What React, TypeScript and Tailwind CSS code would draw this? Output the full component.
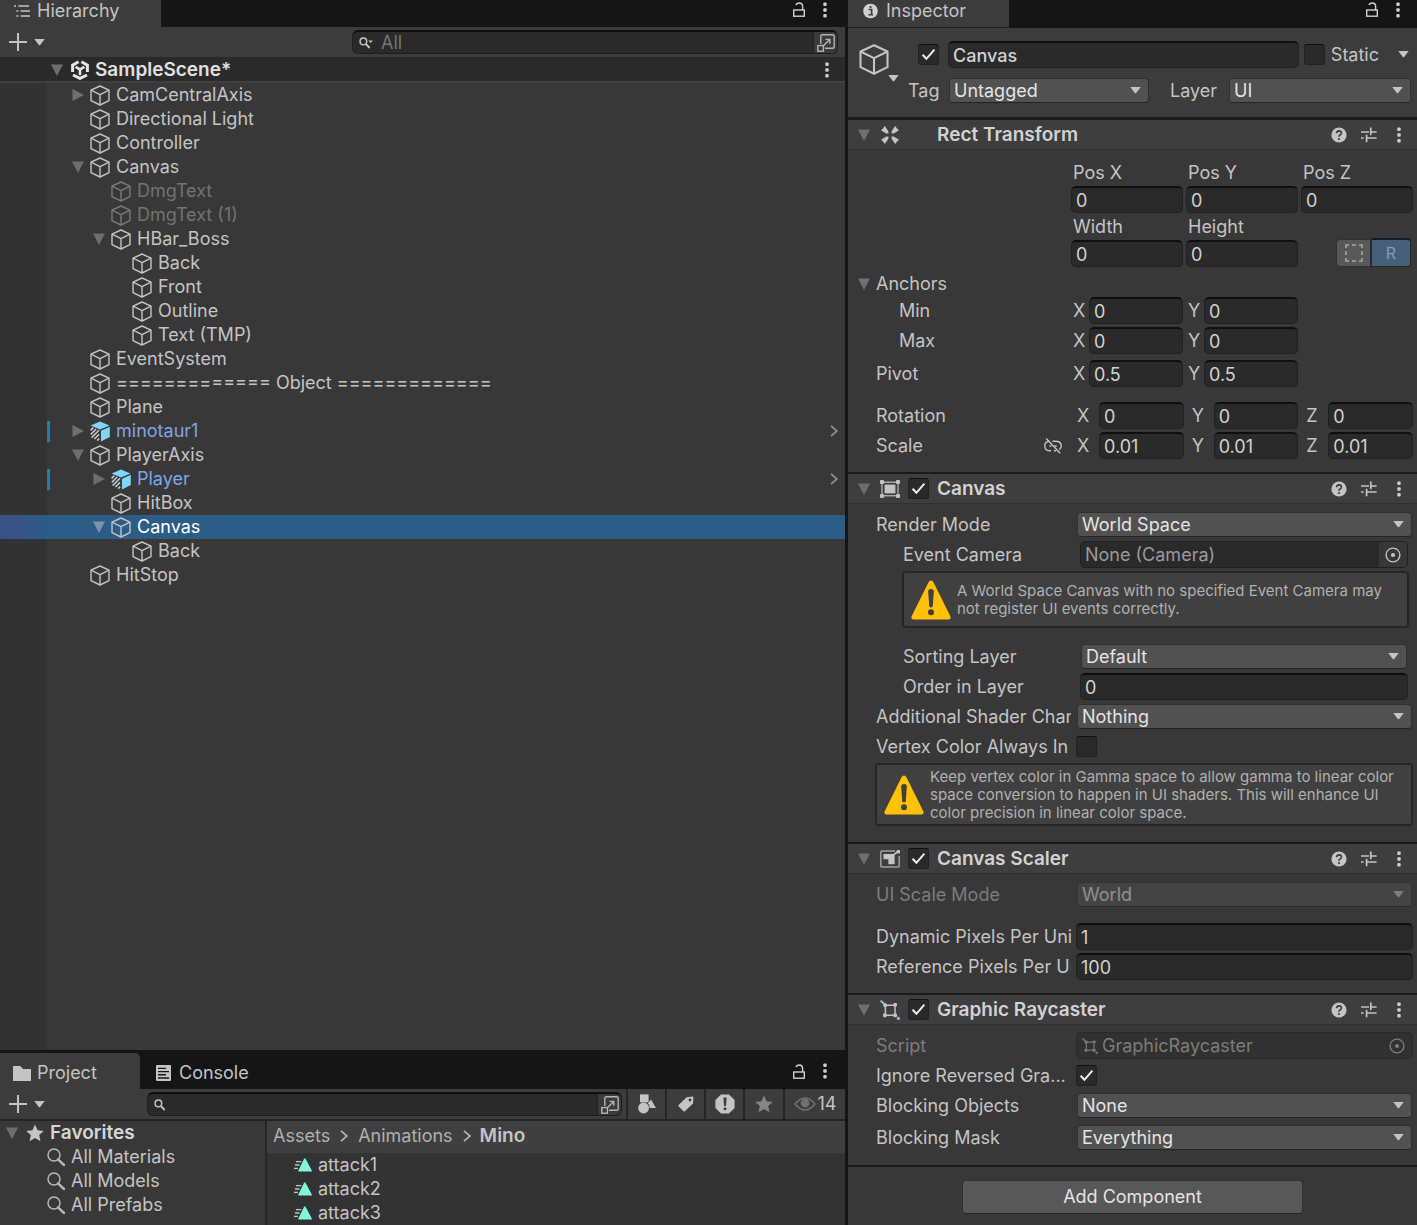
import { useState, type ReactNode } from 'react';

type IconProps = { className?: string };

function Triangle({ open = true, className = '' }: { open?: boolean; className?: string }) {
  return (
    <svg viewBox="0 0 12 12" className={`w-3 h-3 shrink-0 ${className}`} fill="currentColor">
      {open ? <path d="M0 0.5h12L6 12z" /> : <path d="M0.5 0L12 6 0.5 12z" />}
    </svg>
  );
}

function Caret({ className = '' }: IconProps) {
  return (
    <svg viewBox="0 0 11 7" className={`w-[11px] h-[7px] shrink-0 text-[#c4c4c4] ${className}`} fill="currentColor">
      <path d="M0.3 0h10.4L6.4 5.8Q5.5 6.9 4.6 5.8z" />
    </svg>
  );
}

function Cube({ className = 'w-5 h-[21px]' }: IconProps) {
  return (
    <svg viewBox="0 0 20 21" className={`shrink-0 ${className}`} fill="none" stroke="currentColor" strokeWidth="1.4" strokeLinejoin="round">
      <path d="M10 1L19 5.2V15.6L10 20L1 15.6V5.2z" />
      <path d="M1 5.2L10 9.6L19 5.2M10 9.6V20" />
    </svg>
  );
}

function PrefabCube() {
  return (
    <svg viewBox="0 0 20 21" className="w-5 h-[21px] shrink-0">
      <path d="M10 0.4L19.4 4.4L10 8.6L0.6 4.4z" fill="#7fd6fd" />
      <path d="M11 9.8L19.8 5.8V16L11 20.6z" fill="#7fd6fd" />
      <path d="M0.6 9.4L3.4 6.6M0.8 13.4L6.2 8M1.6 16.6L9 9.2M4.4 18L9 13.4M7.2 19.6L9.2 17.6" stroke="#c9c9c9" strokeWidth="1.5" />
    </svg>
  );
}

function UnityLogo() {
  return (
    <svg viewBox="0 0 18 20" className="w-[18px] h-5 shrink-0" fill="none" stroke="#e6e6e6" strokeWidth="3">
      <path d="M7.6 1.8L1.6 5.2V12M10.4 1.8L16.4 5.2V12M2 15L9 18.4L16 15" />
      <path d="M4.6 6.8L9 9.4L13.4 6.8M9 9.4V15" strokeWidth="2.6" />
    </svg>
  );
}

function Kebab({ className = '' }: IconProps) {
  return (
    <svg viewBox="0 0 4 16" className={`w-1 h-4 shrink-0 text-[#d0d0d0] ${className}`} fill="currentColor">
      <rect x="0.3" y="0.5" width="3.4" height="3.4" rx="1" />
      <rect x="0.3" y="6.3" width="3.4" height="3.4" rx="1" />
      <rect x="0.3" y="12.1" width="3.4" height="3.4" rx="1" />
    </svg>
  );
}

function Lock() {
  return (
    <svg viewBox="0 0 12 15" className="w-3 h-[15px] shrink-0" fill="none" stroke="#d0d0d0" strokeWidth="1.4">
      <rect x="0.7" y="8" width="10.6" height="6.2" />
      <path d="M9.6 8V4.2Q9.6 1 6.4 1Q3.6 1 3 3" />
    </svg>
  );
}

function Plus() {
  return (
    <svg viewBox="0 0 18 18" className="w-[18px] h-[18px]" stroke="#c4c4c4" strokeWidth="2">
      <path d="M9 0v18M0 9h18" />
    </svg>
  );
}

function SearchSmall({ menu = false }: { menu?: boolean }) {
  return (
    <svg viewBox="0 0 14 12" className="w-[14px] h-3 shrink-0" fill="none" stroke="#c4c4c4">
      <circle cx="4.4" cy="4.4" r="3.3" strokeWidth="1.5" />
      <path d="M6.8 6.8L10.6 11" strokeWidth="1.9" />
      {menu && <path d="M9.4 3.4h4.4L11.6 6z" fill="#c4c4c4" stroke="none" />}
    </svg>
  );
}

function SearchLarge() {
  return (
    <svg viewBox="0 0 18 18" className="w-[18px] h-[18px] shrink-0" fill="none" stroke="#b9b9b9">
      <circle cx="7" cy="7" r="6" strokeWidth="1.4" />
      <path d="M11 11.4L17 17" strokeWidth="2.4" strokeLinecap="round" />
    </svg>
  );
}

function OpenWindow() {
  return (
    <svg viewBox="0 0 18 18" className="w-[18px] h-[18px]" fill="none" stroke="#b4b4b4" strokeWidth="1.4">
      <path d="M3.8 10V2.6Q3.8 0.8 5.6 0.8H15.4Q17.2 0.8 17.2 2.6V12.4Q17.2 14.2 15.4 14.2H8" />
      <rect x="0.8" y="11.6" width="5.6" height="5.6" />
      <path d="M6.6 11.4L12.6 5.4M8.4 5.4H12.8V9.8" />
    </svg>
  );
}

function Warning() {
  return (
    <svg viewBox="0 0 40 40" className="w-10 h-10 shrink-0">
      <path d="M20 0.5Q21.6 0.5 22.6 2.6L39.2 36Q40.6 39.5 37.4 39.5H2.6Q-0.6 39.5 0.8 36L17.4 2.6Q18.4 0.5 20 0.5z" fill="#ffc107" />
      <path d="M17.2 11.6Q17.2 9 20 9T22.8 11.6L21.8 26Q21.6 27.4 20 27.4T18.2 26z" fill="#3f3f3f" />
      <circle cx="20" cy="32.2" r="3" fill="#3f3f3f" />
    </svg>
  );
}

function HelpIcon() {
  return (
    <svg viewBox="0 0 16 16" className="w-4 h-4">
      <circle cx="8" cy="8" r="7.6" fill="#c4c4c4" />
      <path d="M5.6 6.2Q5.8 3.9 8.1 3.9Q10.5 4 10.4 6Q10.3 7.2 9 8Q8 8.6 8 9.8" fill="none" stroke="#3e3e3e" strokeWidth="1.7" />
      <circle cx="8" cy="12" r="1.1" fill="#3e3e3e" />
    </svg>
  );
}

function Presets() {
  return (
    <svg viewBox="0 0 16 16" className="w-4 h-4" fill="none" stroke="#c4c4c4" strokeWidth="1.7">
      <path d="M0 5h8M10 5h5.6M9.8 0.6v7.6M0 11h2.6M5 11h10.6M5.6 7.8v7.4" />
    </svg>
  );
}

function Target({ className = '' }: IconProps) {
  return (
    <svg viewBox="0 0 16 16" className={`w-4 h-4 ${className}`} fill="none" stroke="currentColor">
      <circle cx="8" cy="8" r="6.9" strokeWidth="1.4" />
      <circle cx="8" cy="8" r="2.1" fill="currentColor" stroke="none" />
    </svg>
  );
}

function RectTransformIcon() {
  return (
    <svg viewBox="0 0 20 20" className="w-5 h-5" fill="#c4c4c4">
      <path d="M4.8 1L8.4 6.2V8.4H6.2L1 5.2L3 3.4z" />
      <path d="M15.2 1L11.6 6.2V8.4H13.8L19 5.2L17 3.4z" />
      <path d="M4.8 19L8.4 13.8V11.6H6.2L1 14.8L3 16.6z" />
      <path d="M15.2 19L11.6 13.8V11.6H13.8L19 14.8L17 16.6z" />
    </svg>
  );
}

function CanvasIcon() {
  return (
    <svg viewBox="0 0 20 18" className="w-5 h-[18px]" fill="#c4c4c4">
      <path d="M2 2.2h16v13.6H2z" fill="none" stroke="#a8a8a8" strokeWidth="1.4" />
      <rect x="4.6" y="4.6" width="10.8" height="8.8" />
      <rect width="4" height="4" rx="1" />
      <rect x="16" width="4" height="4" rx="1" />
      <rect y="14" width="4" height="4" rx="1" />
      <rect x="16" y="14" width="4" height="4" rx="1" />
    </svg>
  );
}

function ScalerIcon() {
  return (
    <svg viewBox="0 0 20 18" className="w-5 h-[18px]" fill="#c4c4c4">
      <path d="M15 1H2Q0.8 1 0.8 2.2V15.8Q0.8 17 2 17H18Q19.2 17 19.2 15.8V6" fill="none" stroke="#a0a0a0" strokeWidth="1.5" />
      <path d="M3.4 4H14.6V14.2H8.4V9.2H3.4z" />
      <path d="M14 4.6L17.6 1.6" stroke="#c4c4c4" strokeWidth="1.6" />
      <rect x="16.6" width="3.4" height="3.4" rx="1" />
    </svg>
  );
}

function RaycasterIcon({ className = 'w-5 h-5' }: IconProps) {
  return (
    <svg viewBox="0 0 20 20" className={`shrink-0 ${className}`} fill="#c4c4c4">
      <path d="M0.6 0.6L5 4.6" stroke="#7cc4e8" strokeWidth="2" />
      <path d="M5.4 5.2h9.6v10H5.4z" fill="none" stroke="#c4c4c4" strokeWidth="1.5" />
      <rect x="3.4" y="3.4" width="3.6" height="3.6" rx="1" />
      <rect x="13.4" y="3" width="3.6" height="3.6" rx="1" />
      <rect x="3" y="13.6" width="3.6" height="3.6" rx="1" />
      <rect x="13.4" y="13.6" width="3.6" height="3.6" rx="1" />
      <circle cx="18.4" cy="18.4" r="1.6" fill="#7cc4e8" />
    </svg>
  );
}

function LinkOff() {
  return (
    <svg viewBox="0 0 18 16" className="w-[18px] h-4" fill="none" stroke="#c4c4c4" strokeWidth="1.4">
      <path d="M5.4 3.2Q0.8 3.4 0.8 8Q0.8 12.6 5.4 12.8H7M8.4 3.2H12.4Q17.2 3.6 17.2 8Q17.2 10.2 15.4 11.6M5.4 8h2M10.4 8h2.4M9.8 12.8h2.4" />
      <path d="M2.2 0.6L16.2 15.2" />
    </svg>
  );
}

function Chevron({ className = '' }: IconProps) {
  return (
    <svg viewBox="0 0 8 12" className={`w-2 h-3 shrink-0 ${className}`} fill="none" stroke="currentColor" strokeWidth="1.8">
      <path d="M1 0.8L6.8 6L1 11.2" />
    </svg>
  );
}

function ClipIcon() {
  return (
    <svg viewBox="0 0 18 14" className="w-[18px] h-[14px] shrink-0">
      <path d="M11.4 0.4L17.8 12.4Q18 13.6 17 13.6H5Q4 13.6 4.4 12.4L10.2 0.4z" fill="#80f7dc" />
      <path d="M2 3.6H7.4M1 7H5.6M0 10.4H4" stroke="#b9c9c5" strokeWidth="1.3" />
    </svg>
  );
}

function Star({ className = '' }: IconProps) {
  return (
    <svg viewBox="0 0 18 18" className={`w-[18px] h-[18px] shrink-0 ${className}`} fill="currentColor">
      <path d="M9 0.5L11.6 6.2L17.8 6.9L13.2 11L14.5 17.2L9 14.1L3.5 17.2L4.8 11L0.2 6.9L6.4 6.2z" />
    </svg>
  );
}

/* ---------- controls ---------- */

function Checkbox({ label, checked = false }: { label: string; checked?: boolean }) {
  return (
    <span className="relative w-[21px] h-[21px] shrink-0">
      <input
        type="checkbox"
        aria-label={label}
        defaultChecked={checked}
        className="peer block w-full h-full appearance-none rounded-[3px] bg-[#2a2a2a] border border-[#212121] border-t-[#101010]"
      />
      <svg viewBox="0 0 21 21" className="absolute inset-0 hidden pointer-events-none peer-checked:block" fill="none" stroke="#eeeeee" strokeWidth="2">
        <path d="M4.6 10.8L8.4 14.8L16.4 5.6" />
      </svg>
    </span>
  );
}

function TextField({ label, value, className = '' }: { label: string; value: string; className?: string }) {
  return (
    <input
      type="text"
      aria-label={label}
      defaultValue={value}
      className={`w-full min-w-0 h-[27px] px-1 rounded-[5px] bg-[#2a2a2a] border border-[#212121] border-t-2 border-t-[#0f0f0f] text-[#d2d2d2] outline-none ${className}`}
    />
  );
}

function Dropdown({ label, value, disabled = false }: { label: string; value: string; disabled?: boolean }) {
  return (
    <span className={`relative flex-1 min-w-0 mx-px ${disabled ? 'opacity-50' : ''}`}>
      <select
        aria-label={label}
        disabled={disabled}
        className="block w-full h-[25px] pl-1 pr-6 appearance-none rounded-[4px] bg-[#515151] border border-[#303030] border-b-[#242424] text-[#e4e4e4] leading-5 outline-none"
      >
        <option>{value}</option>
      </select>
      <Caret className="absolute right-2 top-[9px] pointer-events-none" />
    </span>
  );
}

function Row({ label, children, indent = false, dim = false, className = 'h-[27px]' }: {
  label: string;
  children: ReactNode;
  indent?: boolean;
  dim?: boolean;
  className?: string;
}) {
  return (
    <div className={`flex items-center ${className}`}>
      <span className={`w-[195px] mr-[5px] shrink-0 overflow-hidden whitespace-nowrap ${indent ? 'pl-[27px]' : ''} ${dim ? 'text-[#7c7c7c]' : ''}`}>
        {label}
      </span>
      <div className={`flex items-center flex-1 min-w-0 ${indent ? 'pl-1 pr-[5px]' : ''}`}>{children}</div>
    </div>
  );
}

function AxisRow({ label, values, wide = false, child = false, className = '', extra }: {
  label: string;
  values: string[];
  wide?: boolean;
  child?: boolean;
  className?: string;
  extra?: ReactNode;
}) {
  return (
    <div className={`flex items-center h-[27px] ${className}`}>
      <div className={`flex items-center justify-between shrink-0 ${wide ? 'w-[201px] pr-[15px]' : 'w-[195px]'} ${child ? 'pl-[23px]' : ''}`}>
        <span>{label}</span>
        {extra}
      </div>
      <div className={`grid grid-cols-3 flex-1 ${wide ? 'gap-2' : 'gap-[3px]'}`}>
        {values.map((value, i) => {
          const axis = 'XYZ'[i];
          return (
            <label key={axis} className="flex items-center">
              <span className={`shrink-0 ${wide ? 'w-[22px]' : 'w-[18px] pl-[2px]'}`}>{axis}</span>
              <TextField label={`${label} ${axis}`} value={value} />
            </label>
          );
        })}
      </div>
    </div>
  );
}

function HelpBox({ children, className = '' }: { children: ReactNode; className?: string }) {
  return (
    <div className={`flex items-center gap-[6px] pl-[7px] pr-4 rounded-[4px] bg-[#404040] border-2 border-[#262626] text-[15px] leading-[18px] text-[#b0b0b0] ${className}`}>
      <Warning />
      <p>{children}</p>
    </div>
  );
}

function Section({ title, icon, toggle = true, children, className = '' }: {
  title: string;
  icon: ReactNode;
  toggle?: boolean;
  children: ReactNode;
  className?: string;
}) {
  const [open, setOpen] = useState(true);

  return (
    <section className="border-b-2 border-[#1a1a1a]">
      <header className="flex items-center h-[30px] pl-[10px] pr-4 bg-[#3e3e3e] border-b border-[#303030]">
        <button aria-label={`Toggle ${title}`} onClick={() => setOpen(!open)} className="mr-[10px] text-[#6e6e6e]">
          <Triangle open={open} />
        </button>
        <span className="flex items-center justify-center w-5 mr-2">{icon}</span>
        {toggle ? <Checkbox label={`${title} enabled`} checked /> : <span className="w-[21px]" />}
        <h2 className="ml-2 pt-px text-[19px] font-semibold text-[#d2d2d2]">{title}</h2>
        <div className="flex items-center ml-auto">
          <button aria-label="Help" className="mr-[14px]"><HelpIcon /></button>
          <button aria-label="Presets" className="mr-5"><Presets /></button>
          <button aria-label="More"><Kebab /></button>
        </div>
      </header>
      {open && <div className={`flex flex-col pl-7 pr-1 ${className}`}>{children}</div>}
    </section>
  );
}

/* ---------- hierarchy ---------- */

interface Item {
  name: string;
  depth: number;
  open?: boolean;
  prefab?: boolean;
  disabled?: boolean;
  selected?: boolean;
}

const items: Item[] = [
  { name: 'CamCentralAxis', depth: 0, open: false },
  { name: 'Directional Light', depth: 0 },
  { name: 'Controller', depth: 0 },
  { name: 'Canvas', depth: 0, open: true },
  { name: 'DmgText', depth: 1, disabled: true },
  { name: 'DmgText (1)', depth: 1, disabled: true },
  { name: 'HBar_Boss', depth: 1, open: true },
  { name: 'Back', depth: 2 },
  { name: 'Front', depth: 2 },
  { name: 'Outline', depth: 2 },
  { name: 'Text (TMP)', depth: 2 },
  { name: 'EventSystem', depth: 0 },
  { name: '============= Object =============', depth: 0 },
  { name: 'Plane', depth: 0 },
  { name: 'minotaur1', depth: 0, open: false, prefab: true },
  { name: 'PlayerAxis', depth: 0, open: true },
  { name: 'Player', depth: 1, open: false, prefab: true },
  { name: 'HitBox', depth: 1 },
  { name: 'Canvas', depth: 1, open: true, selected: true },
  { name: 'Back', depth: 2 },
  { name: 'HitStop', depth: 0 },
];

const indents = ['pl-[22px]', 'pl-[43px]', 'pl-[64px]'];

function TreeRow({ item }: { item: Item }) {
  let color = 'text-[#c4c4c4]';
  if (item.prefab) color = 'text-[#7fa5e6]';
  if (item.disabled) color = 'text-[#727272]';
  if (item.selected) color = 'text-white';

  return (
    <li className={`flex h-6 ${item.selected ? 'bg-[#2c5d87]' : ''}`}>
      <span className={`w-[47px] shrink-0 ${item.selected ? 'bg-linear-to-r from-[#3a5185] to-[#2c5b87]' : 'bg-[#323232]'}`} />
      <div className="flex items-center flex-1 pr-[7px]">
        <span className={`w-[3px] h-[21px] -mr-[3px] ${item.prefab ? 'bg-[#1b7fb4]' : ''}`} />
        <span className={`flex items-center ${indents[item.depth]} ${color}`}>
          <span className={`w-6 pl-[3px] ${item.selected ? 'text-[#7b93a8]' : 'text-[#6e6e6e]'}`}>
            {item.open !== undefined && <Triangle open={item.open} />}
          </span>
          <span className={`ml-[-3px] mr-[6px] ${item.disabled ? 'text-[#7a7a7a]' : 'text-[#c4c4c4]'}`}>
            {item.prefab ? <PrefabCube /> : <Cube />}
          </span>
          {item.name}
        </span>
        {item.prefab && <Chevron className="ml-auto text-[#8f8f8f]" />}
      </div>
    </li>
  );
}

function AddMenu() {
  return (
    <button aria-label="Add" className="flex items-center gap-[7px] pl-[9px]">
      <Plus />
      <Caret />
    </button>
  );
}

function SearchBox({ placeholder, menu = false, className = '' }: { placeholder?: string; menu?: boolean; className?: string }) {
  return (
    <div className={`flex items-center h-6 pl-[6px] rounded-[6px] bg-[#2a2a2a] border border-[#1e1e1e] border-t-2 border-t-[#0f0f0f] ${className}`}>
      <SearchSmall menu={menu} />
      <input
        type="text"
        aria-label="Search"
        placeholder={placeholder}
        className="flex-1 min-w-0 pl-2 h-5 bg-transparent outline-none placeholder:text-[#757575]"
      />
      <button aria-label="Open in search window" className="flex items-center justify-center w-6 h-full rounded-r-[5px] bg-[#3a3a3a] border-l border-[#222222]">
        <OpenWindow />
      </button>
    </div>
  );
}

function Hierarchy() {
  return (
    <section className="flex flex-col flex-1 min-h-0 bg-[#383838]">
      <div className="flex items-center justify-between h-[27px] pr-[18px] bg-[#151515]">
        <h1 className="flex items-center gap-[7px] w-[161px] h-full pl-[14px] pb-[5px] bg-[#3c3c3c]">
          <svg viewBox="0 0 16 12" className="w-4 h-3" stroke="#c4c4c4" strokeWidth="1.4">
            <path d="M0 1h2M4.4 1H15M2.4 6h2M6.6 6H16M2.4 11h2M6.6 11H16" />
          </svg>
          Hierarchy
        </h1>
        <div className="flex items-center gap-[18px] pb-2">
          <button aria-label="Lock"><Lock /></button>
          <button aria-label="More"><Kebab /></button>
        </div>
      </div>
      <div className="flex items-center justify-between h-[30px] pr-[7px] bg-[#3c3c3c]">
        <AddMenu />
        <SearchBox placeholder="All" menu className="w-[58%]" />
      </div>
      <div className="flex items-center h-[26px] pt-[2px] pl-[51px] pr-4 bg-[#2a2a2a] border-b-2 border-[#404040]">
        <Triangle className="text-[#6e6e6e]" />
        <span className="ml-2 mr-[6px]"><UnityLogo /></span>
        <span className="text-[19px] font-semibold text-[#e0e0e0]">SampleScene*</span>
        <button aria-label="Scene menu" className="ml-auto"><Kebab /></button>
      </div>
      <ul>
        {items.map((item, i) => (
          <TreeRow key={i} item={item} />
        ))}
      </ul>
      <div className="w-[47px] flex-1 bg-[#323232]" />
    </section>
  );
}

/* ---------- project ---------- */

const toolButton = 'flex items-center justify-center h-full border-l-2 border-[#262626]';

function Project() {
  return (
    <section className="flex flex-col h-[175px] shrink-0 bg-[#383838]">
      <div className="flex items-end h-[39px] pr-[18px] bg-[#151515]">
        <button className="flex items-center gap-[6px] w-[140px] h-9 pl-[13px] pt-1 rounded-tr-[5px] bg-[#3c3c3c]">
          <svg viewBox="0 0 18 15" className="w-[18px] h-[15px]" fill="#c4c4c4">
            <path d="M0 0h7.4L10 3h8v12H0z" />
          </svg>
          Project
        </button>
        <button className="flex items-center gap-2 h-9 pl-4 pt-1">
          <svg viewBox="0 0 15 16" className="w-[15px] h-4">
            <rect width="15" height="16" rx="1" fill="#c4c4c4" />
            <path d="M2 3.4h8M2 6.6h11M2 9.8h8M2 13h11" stroke="#151515" strokeWidth="1.4" />
          </svg>
          Console
        </button>
        <div className="flex items-center gap-[18px] h-9 ml-auto">
          <button aria-label="Lock"><Lock /></button>
          <button aria-label="More"><Kebab /></button>
        </div>
      </div>
      <div className="flex items-center h-8 bg-[#3c3c3c] border-b-2 border-[#242424]">
        <AddMenu />
        <SearchBox className="flex-1 ml-[102px] mr-1" />
        <button aria-label="Search by type" className={`${toolButton} w-[39px]`}>
          <svg viewBox="0 0 18 20" className="w-[18px] h-5" fill="#c4c4c4">
            <rect x="2" y="0.4" width="8.6" height="8" />
            <circle cx="5.6" cy="14" r="5.4" />
            <path d="M13 5.4L18 14H11.6Q11.6 10.6 9.8 9.6z" />
          </svg>
        </button>
        <button aria-label="Search by label" className={`${toolButton} w-[39px]`}>
          <svg viewBox="0 0 16 16" className="w-4 h-4">
            <path d="M8.6 1.2L14.6 0.6Q15.4 0.6 15.4 1.4L15 7.4L6.6 15.4Q6 15.8 5.4 15.2L0.6 10.2Q0.2 9.6 0.6 9z" fill="#c4c4c4" />
            <circle cx="12" cy="4" r="1.4" fill="#3c3c3c" />
          </svg>
        </button>
        <button aria-label="Search by import log" className={`${toolButton} w-[39px]`}>
          <svg viewBox="0 0 20 20" className="w-5 h-5">
            <path d="M6 0.4h8L19.6 6v8L14 19.6H6L0.4 14V6z" fill="#c4c4c4" />
            <path d="M8.4 3.4h3.2L11 12H9z" fill="#3c3c3c" />
            <circle cx="10" cy="14.8" r="1.5" fill="#3c3c3c" />
          </svg>
        </button>
        <button aria-label="Save search" className={`${toolButton} w-10 text-[#858585]`}>
          <Star />
        </button>
        <button aria-label="Hidden packages" className={`${toolButton} gap-[2px] w-[62px]`}>
          <svg viewBox="0 0 22 14" className="w-[22px] h-[14px]">
            <path d="M1 7Q11 -5 21 7Q11 19 1 7z" fill="none" stroke="#707070" strokeWidth="1.6" />
            <circle cx="11" cy="6" r="4.4" fill="#707070" />
          </svg>
          14
        </button>
      </div>
      <div className="flex flex-1 min-h-0">
        <ul className="w-[267px] shrink-0 border-r-2 border-[#262626]">
          <li className="flex items-center h-6 pl-[6px] text-[19px] font-semibold text-[#d6d6d6]">
            <Triangle className="mr-2 text-[#6e6e6e]" />
            <Star className="mr-[6px] text-[#c4c4c4]" />
            Favorites
          </li>
          {['All Materials', 'All Models', 'All Prefabs'].map((name) => (
            <li key={name} className="flex items-center gap-[6px] h-6 pl-[47px]">
              <SearchLarge />
              {name}
            </li>
          ))}
        </ul>
        <div className="flex-1 bg-[#333333]">
          <nav className="flex items-center gap-[9px] h-8 pl-[6px] pb-[3px] bg-[#3f3f3f] text-[#b0b0b0]">
            <a href="#assets">Assets</a>
            <Chevron className="mx-px" />
            <a href="#animations">Animations</a>
            <Chevron className="ml-px" />
            <a href="#mino" className="text-[19px] font-semibold text-[#c4c4c4]">Mino</a>
          </nav>
          <ul>
            {['attack1', 'attack2', 'attack3'].map((name) => (
              <li key={name} className="flex items-center gap-[6px] h-6 pl-[27px]">
                <ClipIcon />
                {name}
              </li>
            ))}
          </ul>
        </div>
      </div>
    </section>
  );
}

/* ---------- inspector ---------- */

function RectField({ label }: { label: string }) {
  return (
    <label className="flex flex-col gap-px">
      <span className="h-6 pl-[2px] leading-6">{label}</span>
      <TextField label={label} value="0" />
    </label>
  );
}

function Inspector() {
  return (
    <aside className="flex flex-col border-l-[3px] border-[#151515] bg-[#383838]">
      <div className="flex items-center justify-between h-7 pr-[17px] bg-[#151515]">
        <h1 className="flex items-center gap-2 w-[161px] h-full pl-[15px] pb-[6px] bg-[#3c3c3c] border-b border-[#222222]">
          <svg viewBox="0 0 16 16" className="w-[15px] h-4">
            <circle cx="8" cy="8" r="7.8" fill="#d0d0d0" />
            <path d="M6 6.4h3.2v5M5.8 12h5" stroke="#3c3c3c" strokeWidth="1.8" fill="none" />
            <circle cx="8" cy="3.8" r="1.2" fill="#3c3c3c" />
          </svg>
          Inspector
        </h1>
        <div className="flex items-center gap-[18px] pb-[9px]">
          <button aria-label="Lock"><Lock /></button>
          <button aria-label="More"><Kebab /></button>
        </div>
      </div>

      <div className="flex items-start pt-[13px] pb-[13px] bg-[#3c3c3c] border-b-[3px] border-[#1c1c1c]">
        <button aria-label="Object icon" className="relative w-[49px] ml-[11px] mt-[2px] shrink-0 text-[#c4c4c4]">
          <Cube className="w-[30px] h-[33px]" />
          <Caret className="absolute left-[29px] top-8" />
        </button>
        <div className="flex flex-col flex-1 min-w-0 gap-[9px]">
          <div className="flex items-center pl-[10px] pr-2">
            <Checkbox label="Active" checked />
            <TextField label="Name" value="Canvas" className="flex-1 ml-[9px] mr-[5px] font-medium" />
            <Checkbox label="Static" />
            <span className="ml-[6px]">Static</span>
            <button aria-label="Static flags" className="ml-[19px]"><Caret /></button>
          </div>
          <div className="flex items-center h-[27px] pr-[5px]">
            <span className="w-10 shrink-0">Tag</span>
            <Dropdown label="Tag" value="Untagged" />
            <span className="w-[58px] ml-5 shrink-0">Layer</span>
            <span className="flex w-[184px]">
              <Dropdown label="Layer" value="UI" />
            </span>
          </div>
        </div>
      </div>

      <Section title="Rect Transform" icon={<RectTransformIcon />} toggle={false} className="pt-[11px] pb-[13px]">
        <div className="grid grid-cols-3 gap-x-[3px] gap-y-[2px] ml-[195px]">
          <RectField label="Pos X" />
          <RectField label="Pos Y" />
          <RectField label="Pos Z" />
          <RectField label="Width" />
          <RectField label="Height" />
          <div className="flex items-end justify-end pr-[2px]">
            <button aria-label="Blueprint mode" className="flex items-center justify-center w-[35px] h-7 rounded-l-[4px] bg-[#585858] border border-[#303030]">
              <svg viewBox="0 0 18 18" className="w-[18px] h-[18px]" fill="none" stroke="#a6a6a6" strokeWidth="1.6">
                <path d="M1 4V1H4M7 1H11M14 1H17V4M17 7V11M17 14V17H14M11 17H7M4 17H1V14M1 11V7" />
              </svg>
            </button>
            <button className="w-10 h-[29px] rounded-r-[4px] bg-[#46607c] border border-[#262626] border-t-2 border-t-[#121c28] text-base text-[#7f9cb8]">
              R
            </button>
          </div>
        </div>
        <div className="flex items-center gap-[6px] h-[27px] mt-[3px] -ml-[18px]">
          <Triangle className="text-[#6e6e6e]" />
          Anchors
        </div>
        <AxisRow label="Min" values={['0', '0']} child />
        <AxisRow label="Max" values={['0', '0']} child className="mt-[3px]" />
        <AxisRow label="Pivot" values={['0.5', '0.5']} className="mt-[6px]" />
        <AxisRow label="Rotation" values={['0', '0', '0']} wide className="mt-[15px]" />
        <AxisRow label="Scale" values={['0.01', '0.01', '0.01']} wide className="mt-[3px]" extra={<LinkOff />} />
      </Section>

      <Section title="Canvas" icon={<CanvasIcon />} className="gap-[3px] pt-[7px] pb-4">
        <Row label="Render Mode"><Dropdown label="Render Mode" value="World Space" /></Row>
        <Row label="Event Camera" indent>
          <div className="flex items-center flex-1 h-[27px] pl-1 rounded-[5px] bg-[#2a2a2a] border border-[#202020] text-[#9a9a9a]">
            <span className="flex-1">None (Camera)</span>
            <button aria-label="Pick camera" className="flex items-center justify-center w-7 h-full rounded-r-[4px] bg-[#373737] text-[#c4c4c4]">
              <Target />
            </button>
          </div>
        </Row>
        <HelpBox className="h-[57px] ml-[26px] mr-1">
          A World Space Canvas with no specified Event Camera may not register UI events correctly.
        </HelpBox>
        <Row label="Sorting Layer" indent className="h-[27px] mt-3"><Dropdown label="Sorting Layer" value="Default" /></Row>
        <Row label="Order in Layer" indent><TextField label="Order in Layer" value="0" /></Row>
        <Row label="Additional Shader Channels"><Dropdown label="Additional Shader Channels" value="Nothing" /></Row>
        <Row label="Vertex Color Always In Gamma Color Space"><Checkbox label="Vertex Color Always In Gamma Color Space" /></Row>
        <HelpBox className="h-[63px] -ml-px">
          Keep vertex color in Gamma space to allow gamma to linear color space conversion to happen in UI shaders. This will enhance UI color precision in linear color space.
        </HelpBox>
      </Section>

      <Section title="Canvas Scaler" icon={<ScalerIcon />} className="gap-[3px] pt-[7px] pb-[13px]">
        <Row label="UI Scale Mode" dim><Dropdown label="UI Scale Mode" value="World" disabled /></Row>
        <Row label="Dynamic Pixels Per Unit" className="h-[27px] mt-3"><TextField label="Dynamic Pixels Per Unit" value="1" /></Row>
        <Row label="Reference Pixels Per Unit"><TextField label="Reference Pixels Per Unit" value="100" /></Row>
      </Section>

      <Section title="Graphic Raycaster" icon={<RaycasterIcon />} className="gap-[5px] pt-[7px] pb-[14px]">
        <Row label="Script" dim>
          <div className="flex items-center flex-1 h-[27px] pl-[5px] pr-[7px] rounded-[5px] bg-[#313131] border border-[#2a2a2a] text-[#7c7c7c]">
            <RaycasterIcon className="w-4 h-4 mr-1 opacity-50" />
            <span className="flex-1">GraphicRaycaster</span>
            <Target />
          </div>
        </Row>
        <Row label="Ignore Reversed Gra..." className="h-[23px]"><Checkbox label="Ignore Reversed Graphics" checked /></Row>
        <Row label="Blocking Objects"><Dropdown label="Blocking Objects" value="None" /></Row>
        <Row label="Blocking Mask"><Dropdown label="Blocking Mask" value="Everything" /></Row>
      </Section>

      <button className="self-center w-[60%] h-[34px] mt-[13px] rounded-[4px] bg-[#585858] border border-[#303030] border-b-[#242424] text-[#e4e4e4]">
        Add Component
      </button>
    </aside>
  );
}

export default function App() {
  return (
    <main className="grid grid-cols-[845fr_572fr] min-h-screen overflow-hidden bg-[#151515] font-['Inter',sans-serif] text-[18px] leading-6 text-[#c4c4c4]">
      <div className="flex flex-col">
        <Hierarchy />
        <Project />
      </div>
      <Inspector />
    </main>
  );
}
